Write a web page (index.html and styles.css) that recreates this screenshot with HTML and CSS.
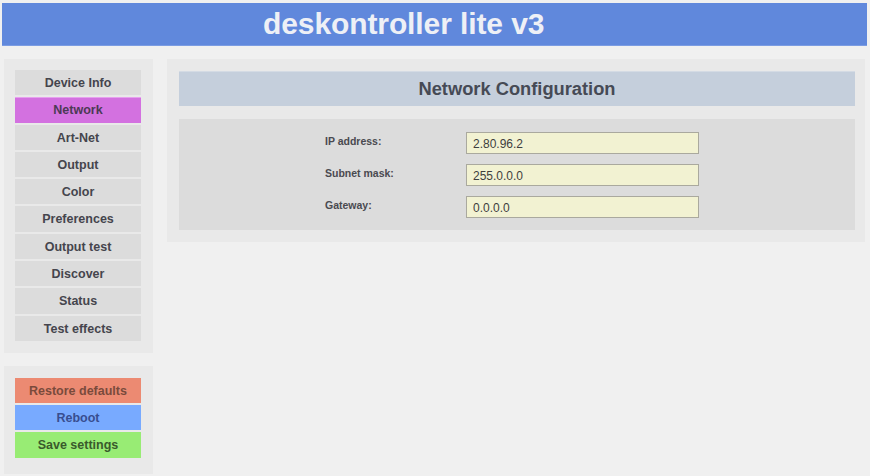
FILE: index.html
```html
<!DOCTYPE html>
<html>
<head>
<meta charset="utf-8">
<title>deskontroller lite v3</title>
<link rel="stylesheet" href="styles.css">
</head>
<body>
<header class="top">
  <h1 class="brand">deskontroller lite v3</h1>
</header>
<div class="layout">
  <aside class="side">
    <nav class="panel menu">
      <a class="item">Device Info</a>
      <a class="item active">Network</a>
      <a class="item">Art-Net</a>
      <a class="item">Output</a>
      <a class="item">Color</a>
      <a class="item">Preferences</a>
      <a class="item">Output test</a>
      <a class="item">Discover</a>
      <a class="item">Status</a>
      <a class="item">Test effects</a>
    </nav>
    <div class="panel actions">
      <a class="item restore">Restore defaults</a>
      <a class="item reboot">Reboot</a>
      <a class="item save">Save settings</a>
    </div>
  </aside>
  <main class="panel content">
    <h2 class="title">Network Configuration</h2>
    <form class="form">
      <label class="row"><span class="label">IP address:</span><input class="field" value="2.80.96.2"></label>
      <label class="row"><span class="label">Subnet mask:</span><input class="field" value="255.0.0.0"></label>
      <label class="row"><span class="label">Gateway:</span><input class="field" value="0.0.0.0"></label>
    </form>
  </main>
</div>
</body>
</html>
```

FILE: styles.css
```css
html, body {
  margin: 0;
  padding: 0;
  background: #f0f0f0;
  font-family: "Liberation Sans", Arial, sans-serif;
  color: #45454d;
}

.top {
  margin: 3px 3px 0 2px;
  height: 42px;
  background: #6088dc;
  border-bottom: 1px solid #7b9ce2;
  display: flex;
  align-items: center;
  padding-left: 261px;
}

.brand {
  margin: 0;
  font-size: 30px;
  font-weight: bold;
  color: #eef0f6;
  letter-spacing: -0.1px;
  line-height: 1;
  padding-bottom: 1px;
}

.layout {
  display: flex;
  gap: 14px;
  padding: 13px 5px 0 4px;
  align-items: flex-start;
}

.side {
  display: flex;
  flex-direction: column;
  gap: 13px;
  width: 149px;
}

.panel {
  background: #e9e9e9;
  padding: 11px 12px 12px 11px;
}

.menu {
  display: flex;
  flex-direction: column;
  gap: 2px;
}

.item {
  display: block;
  height: 25px;
  line-height: 26px;
  text-align: center;
  background: #dcdcdc;
  font-size: 12.5px;
  font-weight: bold;
  color: #45454d;
}

.menu .item {
  height: 25.3px;
  line-height: 27px;
}

.menu .item.active {
  background: #d371e0;
  border-top: 1px solid #e6a0ee;
  height: 24.3px;
  line-height: 25px;
  color: #4b3a55;
}

.actions {
  display: flex;
  flex-direction: column;
  gap: 2px;
  padding-top: 12px;
  padding-bottom: 16px;
}

.restore {
  background: #ec8a72;
  color: #7a4a3c;
}

.reboot {
  background: #78aaff;
  color: #384e90;
}

.save {
  background: #98ec74;
  color: #3a5a2c;
  height: 26px;
}

.content {
  flex: 1;
  padding: 12px 10px 12px 12px;
}

.title {
  margin: 0;
  height: 35px;
  line-height: 33px;
  background: #c5cfdc;
  border-top: 1px solid #d4dbe4;
  box-sizing: border-box;
  text-align: center;
  font-size: 18.3px;
  font-weight: bold;
  color: #464a55;
}

.form {
  margin-top: 13px;
  background: #dcdcdc;
  padding: 13px 0 12px 146px;
  display: flex;
  flex-direction: column;
  gap: 10px;
}

.row {
  display: flex;
  align-items: center;
}

.label {
  width: 141px;
  font-size: 10.5px;
  font-weight: bold;
  color: #4a4a50;
  margin-top: -5px;
}

.field {
  width: 233px;
  height: 22px;
  box-sizing: border-box;
  border: 1px solid #aaa99e;
  background: #f2f2d2;
  padding: 1px 6px 0;
  font-family: "Liberation Sans", Arial, sans-serif;
  font-size: 12px;
  color: #3e3e3e;
  outline: none;
}
```
